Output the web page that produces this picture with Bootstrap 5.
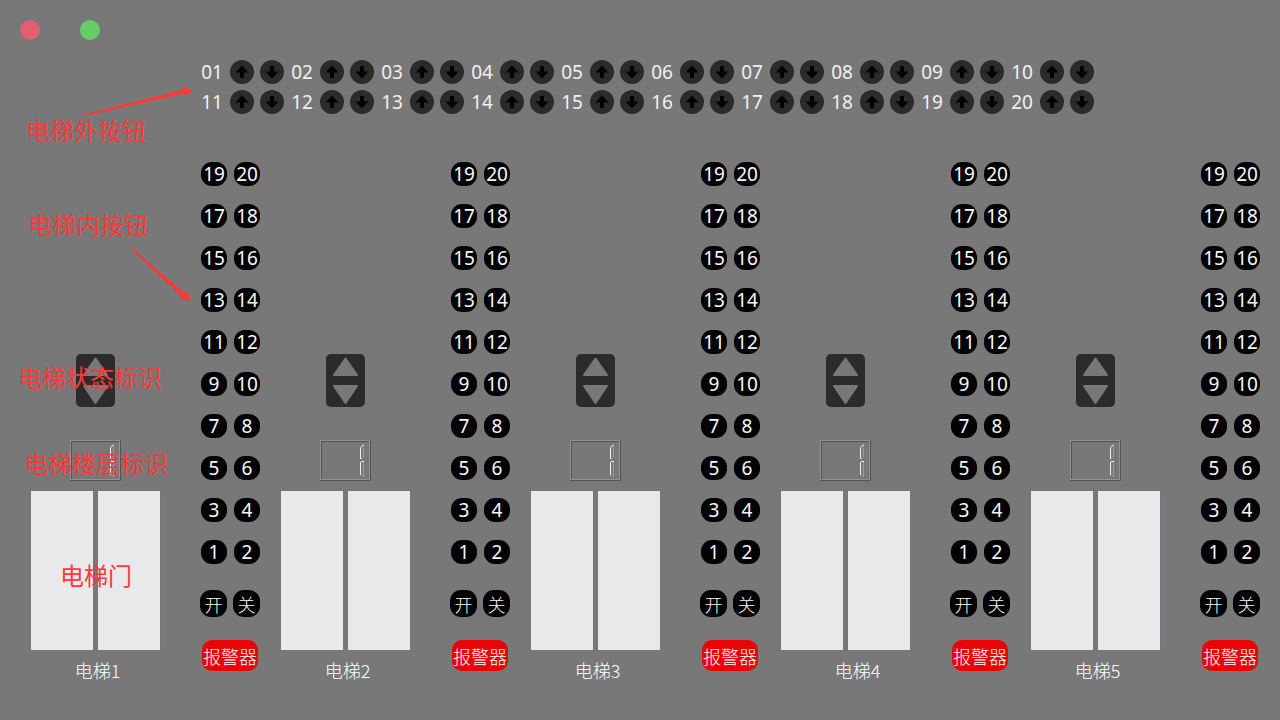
<!DOCTYPE html>
<html lang="zh-CN">
<head>
<meta charset="utf-8">
<meta name="viewport" content="width=device-width, initial-scale=1">
<title>电梯调度</title>
<link href="https://cdn.jsdelivr.net/npm/bootstrap@5.3.0/dist/css/bootstrap.min.css" rel="stylesheet">
<style>
  body {
    background: #787878;
    color: #f0f0f0;
    font-family: "Noto Sans", "Noto Sans CJK SC", sans-serif;
    font-size: 19px;
    line-height: 24px;
  }
  .zh { font-family: "Noto Sans CJK SC", sans-serif; font-size: 18px; font-weight: 300; color: #fff; }
  .dots { gap: 40px; padding: 20px; }
  .dot { width: 20px; height: 20px; border: 0; padding: 0; }
  .dot-stop { background: #e06070; }
  .dot-go { background: #66cc66; }

  .calls { padding-left: 200px; row-gap: 6px; max-width: 1100px; }
  .call { width: 90px; gap: 6px; }
  .call-no { width: 24px; text-align: center; }
  .call-btn { width: 24px; height: 24px; border: 0; padding: 0; background: #2b2b2b; display: flex; }

  .cars { padding: 48px 0 0 30px; }
  .shaft { width: 131px; margin-right: 39px; }
  .shaft-name { line-height: 28px; padding-left: 4px; margin-top: 5px; }
  .shaft-name-wide { padding-left: 24px; }
  .floor-view { margin: 33px 0 9px; }
  .doors { gap: 3px; }
  .leaf { height: 161px; background: #e9e9eb; border: 1px solid #73757f; }

  .panel { padding-bottom: 13px; }
  .floors { display: grid; grid-template-columns: 26px 26px; gap: 18px 7px; padding-left: 1px; }
  .key { border: 0; padding: 0; background: #030305; color: #f8f8f8; border-radius: 11px; height: 24px; line-height: 24px; }
  .key-door { width: 27px; height: 27px; line-height: 28px; }
  .door-keys { gap: 6px; margin: 26px 0 23px; }
  .alarm { width: 56px; height: 31px; background: #e90505; margin-left: 2px; line-height: 32px; white-space: nowrap; border-radius: 10px; display: flex; justify-content: center; }

  .note { position: absolute; color: #ff3838; font-family: "Noto Sans CJK SC", sans-serif; font-size: 24px; line-height: 32px; white-space: nowrap; pointer-events: none; }
  .arrows { position: absolute; left: 0; top: 0; pointer-events: none; }
</style>
</head>
<body class="position-relative overflow-hidden">

<svg class="d-none">
  <symbol id="up" viewBox="0 0 24 24"><path d="M12 5.500L18.500 12.500H14V18H10V12.500H5.500Z" fill="#030305"/></symbol>
  <symbol id="down" viewBox="0 0 24 24"><path d="M12 18.500L18.500 11.500H14V6H10V11.500H5.500Z" fill="#030305"/></symbol>
  <symbol id="state" viewBox="0 0 39 53">
    <rect width="39" height="53" rx="5" fill="#2b2b2b"/>
    <g fill="#787878" stroke="#787878" stroke-width="2" stroke-linejoin="round">
      <path d="M19.500 4.500L31 21H8Z"/><path d="M19.500 49L31 32H8Z"/>
    </g>
  </symbol>
  <symbol id="digit" viewBox="0 0 51 41">
    <path d="M0.500 40V0.500H50M49.500 1V39.500H1" fill="none" stroke="#929292"/>
    <path d="M1.500 39V1.500H49M50.500 0V40.500H0" fill="none" stroke="#535353"/>
    <path d="M40.500 19V7.500L43.500 4.500M40.500 35V22M41 21.500H44" fill="none" stroke="#f0f0f0"/>
    <path d="M43.500 5V17L41 19M43.500 22V37L41 35" fill="none" stroke="#9a9a9a"/>
  </symbol>
</svg>

<header class="dots d-flex">
  <button class="dot dot-stop rounded-circle" type="button" aria-label="停止"></button>
  <button class="dot dot-go rounded-circle" type="button" aria-label="运行"></button>
</header>

<main>
  <section class="calls d-flex flex-wrap" id="calls"></section>
  <section class="cars d-flex" id="cars"></section>
</main>

<svg class="arrows" width="200" height="310" fill="#ff3838" aria-hidden="true">
  <path d="M83 114.500L183.500 89.500L183 87L193 90L185.500 96.500L184.500 93.500L84 116Z"/>
  <path d="M131.500 247.500L184.500 293L187 291L190.500 301.500L179.500 298.500L181.500 296.500L131 249Z"/>
</svg>
<span class="note" style="left:26px;top:114px">电梯外按钮</span>
<span class="note" style="left:28px;top:208px">电梯内按钮</span>
<span class="note" style="left:18px;top:361px">电梯状态标识</span>
<span class="note" style="left:24px;top:447px">电梯楼层标识</span>
<span class="note" style="left:60px;top:559px">电梯门</span>

<script src="https://cdn.jsdelivr.net/npm/bootstrap@5.3.0/dist/js/bootstrap.bundle.min.js"></script>
<script>
  const icon = (id, w, h) => `<svg width="${w}" height="${h}" aria-hidden="true"><use href="#${id}"/></svg>`;

  let calls = '';
  for (let n = 1; n <= 20; n++) {
    const no = String(n).padStart(2, '0');
    calls += `<div class="call d-flex">
      <span class="call-no">${no}</span>
      <button class="call-btn rounded-circle" type="button" aria-label="${no} 上">${icon('up', 24, 24)}</button>
      <button class="call-btn rounded-circle" type="button" aria-label="${no} 下">${icon('down', 24, 24)}</button>
    </div>`;
  }
  document.getElementById('calls').innerHTML = calls;

  let keys = '';
  for (let f = 19; f > 0; f -= 2) {
    keys += `<button class="key" type="button">${f}</button><button class="key" type="button">${f + 1}</button>`;
  }

  let cars = '';
  for (let c = 1; c <= 5; c++) {
    cars += `<div class="d-flex flex-fill">
      <div class="shaft d-flex flex-column align-items-center justify-content-end flex-shrink-0">
        ${icon('state', 39, 53)}
        <div class="floor-view d-flex">${icon('digit', 51, 41)}</div>
        <div class="doors d-flex w-100"><div class="leaf flex-fill"></div><div class="leaf flex-fill"></div></div>
        <div class="shaft-name zh ${c === 4 ? 'shaft-name-wide' : ''}">电梯${c}</div>
      </div>
      <div class="panel">
        <div class="floors">${keys}</div>
        <div class="door-keys d-flex">
          <button class="key key-door zh" type="button">开</button>
          <button class="key key-door zh" type="button">关</button>
        </div>
        <button class="key alarm zh" type="button">报警器</button>
      </div>
    </div>`;
  }
  document.getElementById('cars').innerHTML = cars;
</script>
</body>
</html>
